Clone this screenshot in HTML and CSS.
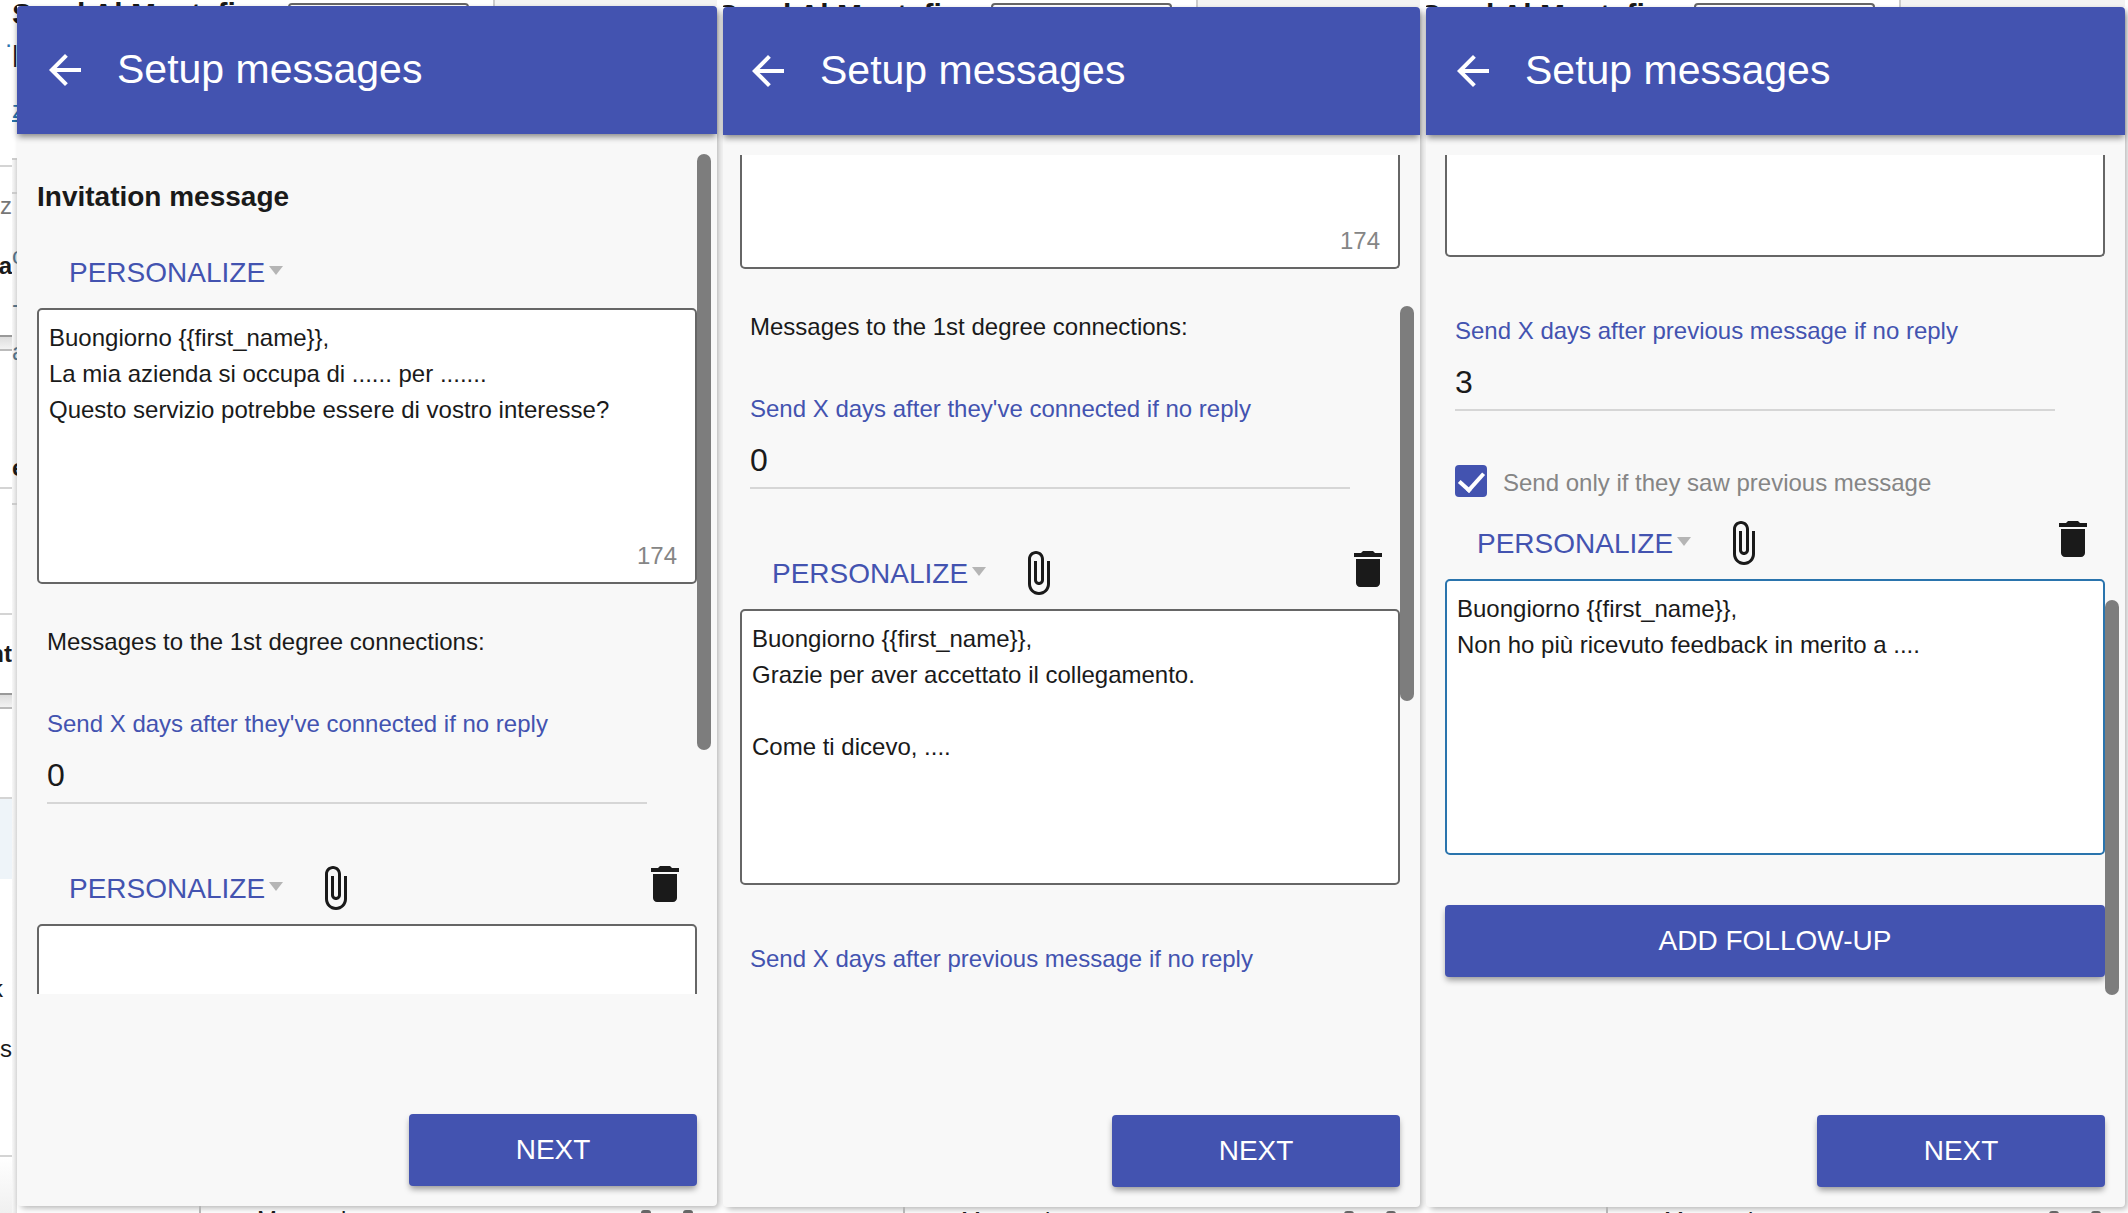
FILE: index.html
```html
<!DOCTYPE html>
<html lang="en">
<head>
    <meta charset="UTF-8">
    <title>Setup messages</title>
    <link rel="stylesheet" href="styles.css">
</head>
<body>
    <!-- shared icons -->
    <svg class="sprite" aria-hidden="true">
        <symbol id="icon-back" viewBox="0 0 24 24">
            <path d="M20 11H7.83l5.59-5.59L12 4l-8 8 8 8 1.41-1.41L7.83 13H20v-2z"/>
        </symbol>
        <symbol id="icon-attach" viewBox="0 0 24 24">
            <path d="M16.5 6v11.5c0 2.21-1.79 4-4 4s-4-1.79-4-4V5c0-1.38 1.12-2.5 2.5-2.5s2.5 1.12 2.5 2.5v10.5c0 .55-.45 1-1 1s-1-.45-1-1V6H10v9.5c0 1.38 1.12 2.5 2.5 2.5s2.5-1.12 2.5-2.5V5c0-2.21-1.79-4-4-4S7 2.79 7 5v12.5c0 3.04 2.46 5.5 5.5 5.5s5.5-2.46 5.5-5.5V6h-1.5z"/>
        </symbol>
        <symbol id="icon-delete" viewBox="0 0 24 24">
            <path d="M6 19c0 1.1.9 2 2 2h8c1.1 0 2-.9 2-2V7H6v12zM19 4h-3.5l-1-1h-5l-1 1H5v2h14V4z"/>
        </symbol>
        <symbol id="icon-caret" viewBox="0 0 14 12">
            <path d="M0 0h14L7 9z"/>
        </symbol>
    </svg>

    <div class="screens">
        <!-- page visible to the left of the first panel -->
        <div class="edge" aria-hidden="true">
            <div class="edge-outer">
                <div class="cut cut-top"><span class="blue">.</span></div>
                <div class="cut cut-person"><span>z</span><b>a</b></div>
                <div class="cut cut-gap"></div>
                <div class="cut cut-row"></div>
                <div class="cut cut-row2"></div>
                <div class="cut cut-short"><b>nt</b></div>
                <div class="cut cut-gap"></div>
                <div class="cut cut-row3"></div>
                <div class="cut cut-active"></div>
                <div class="cut cut-list"><span class="clip">k</span><span>ss</span></div>
                <div class="cut cut-rest"></div>
            </div>
            <div class="edge-inner">
                <div class="bit bit-top"><b>S</b><span>|</span><u>z</u></div>
                <div class="bit bit-line"></div>
                <div class="bit bit-tall"><i>c</i><i>-</i><i>a</i><b>e</b></div>
            </div>
        </div>

        <section class="screen">
            <div class="behind-top" aria-hidden="true">
                <b>Send Al Mustafi</b><span class="outline"></span><span class="side"></span>
            </div>
            <div class="panel">
                <header class="bar">
                    <button class="icon-btn" aria-label="Back"><svg><use href="#icon-back"/></svg></button>
                    <h1>Setup messages</h1>
                </header>
                <div class="scroll">
                    <h2>Invitation message</h2>
                    <div class="tools">
                        <button class="personalize">PERSONALIZE<svg><use href="#icon-caret"/></svg></button>
                    </div>
                    <div class="message">
                        <textarea aria-label="Invitation message">Buongiorno {{first_name}},
La mia azienda si occupa di ...... per .......
Questo servizio potrebbe essere di vostro interesse?</textarea>
                        <span class="counter">174</span>
                    </div>
                    <p class="note">Messages to the 1st degree connections:</p>
                    <div class="days">
                        <label for="days1">Send X days after they've connected if no reply</label>
                        <input id="days1" type="number" value="0">
                    </div>
                    <div class="tools">
                        <button class="personalize">PERSONALIZE<svg><use href="#icon-caret"/></svg></button>
                        <button class="icon-btn" aria-label="Attach file"><svg><use href="#icon-attach"/></svg></button>
                        <button class="icon-btn delete" aria-label="Delete"><svg><use href="#icon-delete"/></svg></button>
                    </div>
                    <div class="message"><textarea aria-label="First message"></textarea></div>
                    <div class="thumb thumb-start"></div>
                </div>
                <footer><button class="primary next">NEXT</button></footer>
            </div>
            <div class="behind-bottom" aria-hidden="true"><span>Messaging</span><i></i><i></i></div>
        </section>

        <section class="screen low second">
            <div class="behind-top" aria-hidden="true">
                <b>Send Al Mustafi</b><span class="outline"></span><span class="side"></span>
            </div>
            <div class="panel">
                <header class="bar">
                    <button class="icon-btn" aria-label="Back"><svg><use href="#icon-back"/></svg></button>
                    <h1>Setup messages</h1>
                </header>
                <div class="scroll">
                    <div class="message">
                        <textarea class="tail" aria-label="Invitation message"></textarea>
                        <span class="counter">174</span>
                    </div>
                    <p class="note">Messages to the 1st degree connections:</p>
                    <div class="days">
                        <label for="days2">Send X days after they've connected if no reply</label>
                        <input id="days2" type="number" value="0">
                    </div>
                    <div class="tools">
                        <button class="personalize">PERSONALIZE<svg><use href="#icon-caret"/></svg></button>
                        <button class="icon-btn" aria-label="Attach file"><svg><use href="#icon-attach"/></svg></button>
                        <button class="icon-btn delete" aria-label="Delete"><svg><use href="#icon-delete"/></svg></button>
                    </div>
                    <div class="message">
                        <textarea aria-label="First message">Buongiorno {{first_name}},
Grazie per aver accettato il collegamento.

Come ti dicevo, ....</textarea>
                    </div>
                    <div class="days follow">
                        <label for="days3">Send X days after previous message if no reply</label>
                        <input id="days3" type="number">
                    </div>
                    <div class="thumb thumb-middle"></div>
                </div>
                <footer><button class="primary next">NEXT</button></footer>
            </div>
            <div class="behind-bottom" aria-hidden="true"><span>Messaging</span><i></i><i></i></div>
        </section>

        <section class="screen low third">
            <div class="behind-top" aria-hidden="true">
                <b>Send Al Mustafi</b><span class="outline"></span><span class="side"></span>
            </div>
            <div class="panel">
                <header class="bar">
                    <button class="icon-btn" aria-label="Back"><svg><use href="#icon-back"/></svg></button>
                    <h1>Setup messages</h1>
                </header>
                <div class="scroll">
                    <div class="message"><textarea class="tail short" aria-label="First message"></textarea></div>
                    <div class="days follow">
                        <label for="days4">Send X days after previous message if no reply</label>
                        <input id="days4" type="number" value="3">
                    </div>
                    <div class="check">
                        <input id="saw" type="checkbox" checked>
                        <label for="saw">Send only if they saw previous message</label>
                    </div>
                    <div class="tools">
                        <button class="personalize">PERSONALIZE<svg><use href="#icon-caret"/></svg></button>
                        <button class="icon-btn" aria-label="Attach file"><svg><use href="#icon-attach"/></svg></button>
                        <button class="icon-btn delete" aria-label="Delete"><svg><use href="#icon-delete"/></svg></button>
                    </div>
                    <div class="message">
                        <textarea class="active" aria-label="Follow-up message">Buongiorno {{first_name}},
Non ho più ricevuto feedback in merito a ....</textarea>
                    </div>
                    <button class="primary add">ADD FOLLOW-UP</button>
                    <div class="thumb thumb-end"></div>
                </div>
                <footer><button class="primary next">NEXT</button></footer>
            </div>
            <div class="behind-bottom" aria-hidden="true"><span>Messaging</span><i></i><i></i></div>
        </section>
    </div>
</body>
</html>
```
FILE: styles.css
```css
* {
    box-sizing: border-box;
}
body {
    margin: 0;
    background: #fff;
    color: #1a1a1a;
    font: 24px/36px "Liberation Sans", Arial, sans-serif;
}
button, input, textarea {
    font: inherit;
    color: inherit;
}
button {
    border: 0;
    padding: 0;
    background: none;
    cursor: pointer;
}
svg {
    display: block;
    fill: currentColor;
}
.sprite {
    display: none;
}
.screens {
    display: grid;
    grid-template-columns: 11px 700fr 697fr 699fr;
    gap: 6px;
    height: 100vh;
    min-height: 800px;
    padding-right: 3px;
    overflow: hidden;
}
.screen {
    display: flex;
    flex-direction: column;
    min-width: 0;
    min-height: 0;
    --gutter: 20px;
}
.second {
    --gutter: 17px;
}
.third {
    --gutter: 19px;
}

/* panel */
.panel {
    flex: 1;
    min-height: 0;
    display: flex;
    flex-direction: column;
    background: #f8f8f8;
    border-radius: 4px;
    box-shadow: 3px 3px 6px -1px rgba(0, 0, 0, 0.3);
}
.bar {
    display: flex;
    align-items: center;
    gap: 28px;
    height: 128px;
    flex-shrink: 0;
    padding-left: calc(var(--gutter) + 4px);
    background: #4353b0;
    color: #fff;
    border-radius: 4px 4px 0 0;
    box-shadow: 0 4px 6px -1px rgba(0, 0, 0, 0.45);
}
.bar h1 {
    margin: 0;
    padding-bottom: 3px;
    font-size: 41px;
    line-height: 48px;
    font-weight: normal;
}
.icon-btn svg {
    width: 48px;
    height: 48px;
}
.scroll {
    position: relative;
    flex: 1;
    min-height: 0;
    margin-top: 20px;
    padding: 0 20px 0 var(--gutter);
    overflow: hidden;
}
.scroll h2 {
    margin: 25px 0 21px;
    font-size: 28px;
    line-height: 36px;
}
.thumb {
    position: absolute;
    right: 6px;
    width: 14px;
    border-radius: 7px;
    background: #7d7d7d;
}
.thumb-start {
    top: 0;
    height: 71%;
}
.thumb-middle {
    top: 18%;
    height: 47%;
}
.thumb-end {
    bottom: 0;
    height: 47%;
}

/* message editor */
.tools {
    display: flex;
    align-items: center;
    gap: 28px;
    height: 72px;
    padding: 0 8px 0 32px;
}
.personalize {
    display: flex;
    align-items: center;
    gap: 4px;
    padding-top: 1px;
    font-size: 28px;
    color: #4353b0;
}
.personalize svg {
    width: 14px;
    height: 12px;
    margin-bottom: 2px;
    color: #b5b5b5;
}
.delete {
    margin: 0 0 8px auto;
}
.message {
    position: relative;
}
.message textarea {
    display: block;
    width: 100%;
    height: 276px;
    padding: 10px;
    border: 2px solid #666;
    border-radius: 5px;
    background: #fff;
    resize: none;
    outline: none;
}
.message .tail {
    height: 114px;
    border-top: 0;
    border-radius: 0 0 5px 5px;
}
.message .short {
    height: 102px;
}
.message .active {
    border-color: #2a74ad;
}
.counter {
    position: absolute;
    right: 20px;
    bottom: 10px;
    color: #858585;
}
.note {
    margin: 40px 0 46px 10px;
}
.days {
    width: 600px;
    max-width: 100%;
    margin: 0 0 48px 10px;
}
.days.follow {
    margin-top: 56px;
}
.days label {
    display: block;
    color: #4353b0;
}
.days input {
    display: block;
    width: 100%;
    height: 62px;
    padding: 6px 0 0;
    border: 0;
    border-bottom: 2px solid #d6d6d6;
    background: none;
    font-size: 32px;
    outline: none;
}
.check {
    display: flex;
    align-items: center;
    gap: 16px;
    height: 48px;
    margin-left: 10px;
    color: #858585;
}
.check input {
    appearance: none;
    display: grid;
    place-items: center;
    width: 32px;
    height: 32px;
    margin: 0 0 4px;
    border-radius: 4px;
    background: #4353b0;
}
.check input:checked::before {
    content: "";
    width: 11px;
    height: 20px;
    margin-bottom: 5px;
    border: solid #fff;
    border-width: 0 4px 4px 0;
    transform: rotate(42deg);
}
.primary {
    height: 72px;
    border-radius: 4px;
    background: #4353b0;
    color: #fff;
    font-size: 28px;
    box-shadow: 0 4px 6px -1px rgba(0, 0, 0, 0.4);
}
.add {
    display: block;
    width: 100%;
    margin-top: 50px;
}
footer {
    display: flex;
    justify-content: flex-end;
    padding: 120px 20px 20px;
}
.next {
    width: 288px;
}

/* what shows of the page above and below the panels */
.behind-top {
    display: flex;
    height: 6px;
    overflow: hidden;
    font-size: 30px;
    line-height: 28px;
}
.low .behind-top {
    height: 7px;
}
.behind-top b {
    flex: 0 0 271px;
    text-indent: -5px;
}
.second .behind-top b,
.third .behind-top b {
    flex-basis: 268px;
}
.low .behind-top b {
    line-height: 30px;
}
.outline {
    width: 181px;
    height: 30px;
    margin: 3px 24px 0 0;
    border: 2px solid #666;
    border-radius: 4px;
}
.side {
    flex: 1;
    height: 30px;
    border-left: 2px solid #ccc;
    background: #f3f3f3;
}
.behind-bottom {
    display: flex;
    gap: 32px;
    height: 7px;
    margin-left: 182px;
    padding: 0 24px 0 56px;
    border-left: 2px solid #b5b5b5;
    overflow: hidden;
    line-height: 28px;
}
.low .behind-bottom {
    height: 6px;
    margin-left: 180px;
}
.behind-bottom span {
    flex: 1;
}
.behind-bottom i {
    width: 10px;
    height: 12px;
    margin-top: 4px;
    background: #666;
    border-radius: 3px;
}

/* left edge */
.edge {
    display: flex;
    width: 17px;
    overflow: hidden;
}
.edge-outer {
    width: 12px;
    display: flex;
    flex-direction: column;
}
.cut {
    display: flex;
    flex-direction: column;
    align-items: flex-end;
    padding-top: 9px;
    border-bottom: 2px solid #d4d4d4;
    overflow: hidden;
    line-height: 60px;
}
.cut-top {
    height: 167px;
    color: #2a74ad;
}
.cut-person {
    height: 170px;
    border-color: #999;
}
.cut-person span {
    color: #777;
}
.cut-gap {
    height: 14px;
    background: linear-gradient(#ddd, #f3f3f3);
    border-color: #bbb;
}
.cut-row {
    height: 138px;
}
.cut-row2 {
    height: 126px;
}
.cut-short {
    height: 80px;
    border-color: #999;
}
.cut-row3 {
    height: 90px;
}
.cut-active {
    height: 80px;
    border: 0;
    background: #eef4f9;
}
.cut-list {
    height: 278px;
    padding-top: 80px;
}
.clip {
    padding-right: 9px;
}
.cut-rest {
    flex: 1;
    border: 0;
    background: linear-gradient(#fff, #f0f0f0);
}
.edge-inner {
    width: 5px;
    background: linear-gradient(to right, #f8f8f8, #dedede);
    overflow: hidden;
}
.bit {
    display: flex;
    flex-direction: column;
    border-bottom: 2px solid #ccc;
    overflow: hidden;
}
.bit-top {
    height: 160px;
    background: #fff;
    gap: 12px;
    line-height: 28px;
}
.bit-top b {
    font-size: 30px;
}
.bit-top u {
    margin-top: 16px;
    color: #2a74ad;
}
.bit-line {
    height: 34px;
}
.bit-tall {
    height: 311px;
    padding-top: 38px;
    line-height: 48px;
}
.bit-tall i {
    font-style: normal;
    color: #557085;
}
.bit-tall b {
    margin-top: 68px;
}
```
